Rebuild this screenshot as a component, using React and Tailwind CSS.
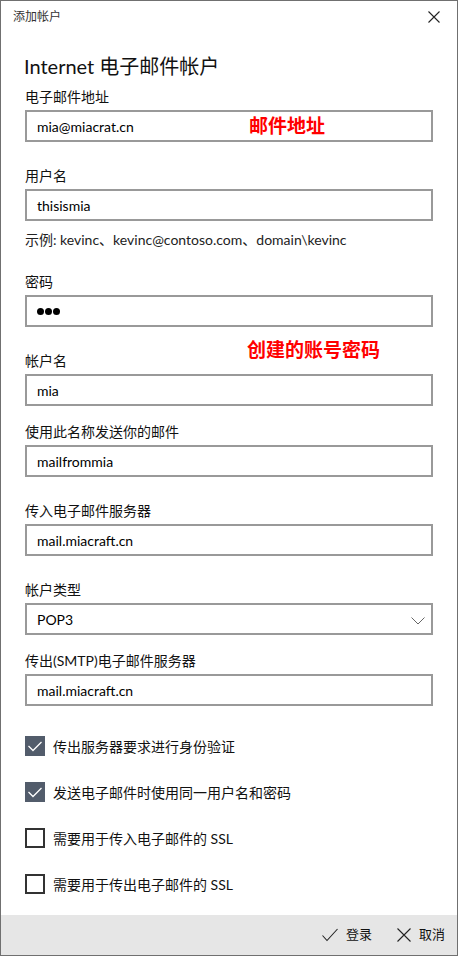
import React from "react";

const font = "font-['Lato','Noto_Sans_CJK_SC',sans-serif]";

function Field({ label, value, className = "", children }) {
  return (
    <div className={`relative ${className}`}>
      <div className="text-[14px] leading-[20px] text-[#111]">{label}</div>
      <div className="relative mt-[3px] h-[32px] border-2 border-[#999999] bg-white flex items-center pl-[10px] text-[14px] text-black">
        {value}
        {children}
      </div>
    </div>
  );
}

function Check({ checked, label, className = "" }) {
  return (
    <div className={`flex items-center h-[20px] ${className}`}>
      {checked ? (
        <div className="w-[20px] h-[20px] bg-[#525c6b] flex items-center justify-center">
          <svg width="20" height="20" viewBox="0 0 20 20">
            <polyline points="3.5,10 8,14.5 16.5,6" fill="none" stroke="#ffffff" strokeWidth="1.3" />
          </svg>
        </div>
      ) : (
        <div className="w-[20px] h-[20px] border-2 border-[#333333] bg-white" />
      )}
      <span className="ml-[8px] text-[14px] text-[#111]">{label}</span>
    </div>
  );
}

export default function App() {
  return (
    <div className={`w-[458px] h-[956px] border border-[#707070] bg-white flex flex-col ${font}`}>
      {/* title bar */}
      <div className="h-[31px] flex items-center justify-between pl-[12px] pr-[17px]">
        <span className="text-[12px] text-[#333]">添加帐户</span>
        <svg width="12" height="12" viewBox="0 0 12 12">
          <path d="M0.5 0.5 L11.5 11.5 M11.5 0.5 L0.5 11.5" stroke="#222" strokeWidth="1.1" fill="none" />
        </svg>
      </div>

      <div className="px-[24px] flex flex-col">
        <div className="mt-[20px] text-[20px] leading-[28px] text-[#111] -ml-[1px]">Internet 电子邮件帐户</div>

        <Field label="电子邮件地址" value="mia@miacrat.cn" className="mt-[7px]">
          <span className="absolute left-[222px] top-[1px] text-[19px] leading-[26px] font-bold text-[#ff0000]">邮件地址</span>
        </Field>

        <Field label="用户名" value="thisismia" className="mt-[24px]" />
        <div className="mt-[9px] text-[14px] leading-[20px] text-[#222]">示例: kevinc、kevinc@contoso.com、domain\kevinc</div>

        <Field
          label="密码"
          className="mt-[22px]"
          value={
            <span className="flex gap-[1px]">
              <span className="w-[7px] h-[7px] rounded-full bg-black" />
              <span className="w-[7px] h-[7px] rounded-full bg-black" />
              <span className="w-[7px] h-[7px] rounded-full bg-black" />
            </span>
          }
        />

        <Field label="帐户名" value="mia" className="mt-[24px]" />
        <span className="relative">
          <span className="absolute left-[222px] -top-[68px] text-[19px] leading-[24px] font-bold text-[#ff0000] whitespace-nowrap">创建的账号密码</span>
        </span>

        <Field label="使用此名称发送你的邮件" value="mailfrommia" className="mt-[16px]" />
        <Field label="传入电子邮件服务器" value="mail.miacraft.cn" className="mt-[24px]" />

        <Field label="帐户类型" value="POP3" className="mt-[24px]">
          <svg className="absolute right-[6px] top-[12px]" width="14" height="8" viewBox="0 0 14 8">
            <polyline points="0.5,0.5 7,7 13.5,0.5" fill="none" stroke="#666" strokeWidth="1" />
          </svg>
        </Field>

        <Field label="传出(SMTP)电子邮件服务器" value="mail.miacraft.cn" className="mt-[16px]" />

        <Check checked label="传出服务器要求进行身份验证" className="mt-[30px]" />
        <Check checked label="发送电子邮件时使用同一用户名和密码" className="mt-[26px]" />
        <Check label="需要用于传入电子邮件的 SSL" className="mt-[26px]" />
        <Check label="需要用于传出电子邮件的 SSL" className="mt-[26px]" />
      </div>

      {/* footer */}
      <div className="mt-auto h-[40px] bg-[#e6e6e6] flex items-center justify-end pr-[12px] text-[13px] text-[#111]">
        <div className="flex items-center">
          <svg width="16" height="14" viewBox="0 0 16 14">
            <polyline points="0.5,7.5 5,12.5 15.5,1" fill="none" stroke="#222" strokeWidth="1.1" />
          </svg>
          <span className="ml-[8px]">登录</span>
        </div>
        <div className="flex items-center ml-[25px]">
          <svg width="14" height="14" viewBox="0 0 14 14">
            <path d="M0.5 0.5 L13.5 13.5 M13.5 0.5 L0.5 13.5" stroke="#222" strokeWidth="1.1" fill="none" />
          </svg>
          <span className="ml-[8px]">取消</span>
        </div>
      </div>
    </div>
  );
}
